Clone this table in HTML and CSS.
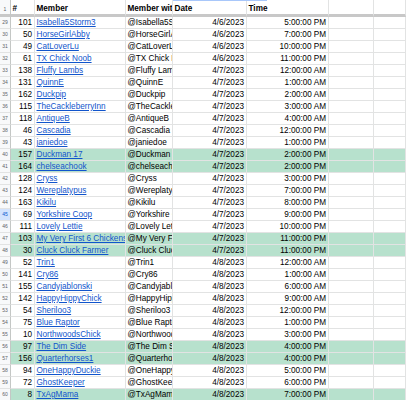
FILE: index.html
```html
<!DOCTYPE html>
<html>
<head>
<meta charset="utf-8">
<link rel="stylesheet" href="styles.css">
</head>
<body>
<div class="sheet">
  <div class="row head">
    <div class="rn">1</div><div class="c">#</div><div class="c">Member</div><div class="c">Member with @</div><div class="c">Date</div><div class="c">Time</div><div class="c"></div><div class="c"></div>
  </div>
  <div class="row"><div class="rn">29</div><div class="c r">101</div><div class="c"><a>Isabella5Storm3</a></div><div class="c">@Isabella5Storm3</div><div class="c r">4/6/2023</div><div class="c r">5:00:00 PM</div><div class="c"></div><div class="c"></div></div>
  <div class="row"><div class="rn">30</div><div class="c r">50</div><div class="c"><a>HorseGirlAbby</a></div><div class="c">@HorseGirlAbby</div><div class="c r">4/6/2023</div><div class="c r">7:00:00 PM</div><div class="c"></div><div class="c"></div></div>
  <div class="row"><div class="rn">31</div><div class="c r">49</div><div class="c"><a>CatLoverLu</a></div><div class="c">@CatLoverLu</div><div class="c r">4/6/2023</div><div class="c r">10:00:00 PM</div><div class="c"></div><div class="c"></div></div>
  <div class="row"><div class="rn">32</div><div class="c r">61</div><div class="c"><a>TX Chick Noob</a></div><div class="c">@TX Chick Noob</div><div class="c r">4/6/2023</div><div class="c r">11:00:00 PM</div><div class="c"></div><div class="c"></div></div>
  <div class="row"><div class="rn">33</div><div class="c r">138</div><div class="c"><a>Fluffy Lambs</a></div><div class="c">@Fluffy Lambs</div><div class="c r">4/7/2023</div><div class="c r">12:00:00 AM</div><div class="c"></div><div class="c"></div></div>
  <div class="row"><div class="rn">34</div><div class="c r">131</div><div class="c"><a>QuinnE</a></div><div class="c">@QuinnE</div><div class="c r">4/7/2023</div><div class="c r">1:00:00 AM</div><div class="c"></div><div class="c"></div></div>
  <div class="row"><div class="rn">35</div><div class="c r">162</div><div class="c"><a>Duckpip</a></div><div class="c">@Duckpip</div><div class="c r">4/7/2023</div><div class="c r">2:00:00 AM</div><div class="c"></div><div class="c"></div></div>
  <div class="row"><div class="rn">36</div><div class="c r">115</div><div class="c"><a>TheCackleberryInn</a></div><div class="c">@TheCackleberryInn</div><div class="c r">4/7/2023</div><div class="c r">3:00:00 AM</div><div class="c"></div><div class="c"></div></div>
  <div class="row"><div class="rn">37</div><div class="c r">118</div><div class="c"><a>AntiqueB</a></div><div class="c">@AntiqueB</div><div class="c r">4/7/2023</div><div class="c r">4:00:00 AM</div><div class="c"></div><div class="c"></div></div>
  <div class="row"><div class="rn">38</div><div class="c r">46</div><div class="c"><a>Cascadia</a></div><div class="c">@Cascadia</div><div class="c r">4/7/2023</div><div class="c r">12:00:00 PM</div><div class="c"></div><div class="c"></div></div>
  <div class="row"><div class="rn">39</div><div class="c r">43</div><div class="c"><a>janiedoe</a></div><div class="c">@janiedoe</div><div class="c r">4/7/2023</div><div class="c r">1:00:00 PM</div><div class="c"></div><div class="c"></div></div>
  <div class="row hl"><div class="rn">40</div><div class="c r">157</div><div class="c"><a>Duckman 17</a></div><div class="c">@Duckman 17</div><div class="c r">4/7/2023</div><div class="c r">2:00:00 PM</div><div class="c"></div><div class="c"></div></div>
  <div class="row hl"><div class="rn">41</div><div class="c r">164</div><div class="c"><a>chelseachook</a></div><div class="c">@chelseachook</div><div class="c r">4/7/2023</div><div class="c r">2:00:00 PM</div><div class="c"></div><div class="c"></div></div>
  <div class="row"><div class="rn">42</div><div class="c r">128</div><div class="c"><a>Cryss</a></div><div class="c">@Cryss</div><div class="c r">4/7/2023</div><div class="c r">3:00:00 PM</div><div class="c"></div><div class="c"></div></div>
  <div class="row"><div class="rn">43</div><div class="c r">124</div><div class="c"><a>Wereplatypus</a></div><div class="c">@Wereplatypus</div><div class="c r">4/7/2023</div><div class="c r">7:00:00 PM</div><div class="c"></div><div class="c"></div></div>
  <div class="row"><div class="rn">44</div><div class="c r">163</div><div class="c"><a>Kikilu</a></div><div class="c">@Kikilu</div><div class="c r">4/7/2023</div><div class="c r">8:00:00 PM</div><div class="c"></div><div class="c"></div></div>
  <div class="row"><div class="rn sel">45</div><div class="c r">69</div><div class="c"><a>Yorkshire Coop</a></div><div class="c">@Yorkshire Coop</div><div class="c r">4/7/2023</div><div class="c r">9:00:00 PM</div><div class="c"></div><div class="c"></div></div>
  <div class="row"><div class="rn">46</div><div class="c r">111</div><div class="c"><a>Lovely Lettie</a></div><div class="c">@Lovely Lettie</div><div class="c r">4/7/2023</div><div class="c r">10:00:00 PM</div><div class="c"></div><div class="c"></div></div>
  <div class="row hl"><div class="rn">47</div><div class="c r">103</div><div class="c"><a>My Very First 6 Chickens</a></div><div class="c">@My Very First 6 Chickens</div><div class="c r">4/7/2023</div><div class="c r">11:00:00 PM</div><div class="c"></div><div class="c"></div></div>
  <div class="row hl"><div class="rn">48</div><div class="c r">30</div><div class="c"><a>Cluck Cluck Farmer</a></div><div class="c">@Cluck Cluck Farmer</div><div class="c r">4/7/2023</div><div class="c r">11:00:00 PM</div><div class="c"></div><div class="c"></div></div>
  <div class="row"><div class="rn">49</div><div class="c r">52</div><div class="c"><a>Trin1</a></div><div class="c">@Trin1</div><div class="c r">4/8/2023</div><div class="c r">12:00:00 AM</div><div class="c"></div><div class="c"></div></div>
  <div class="row"><div class="rn">50</div><div class="c r">141</div><div class="c"><a>Cry86</a></div><div class="c">@Cry86</div><div class="c r">4/8/2023</div><div class="c r">1:00:00 AM</div><div class="c"></div><div class="c"></div></div>
  <div class="row"><div class="rn">51</div><div class="c r">155</div><div class="c"><a>Candyjablonski</a></div><div class="c">@Candyjablonski</div><div class="c r">4/8/2023</div><div class="c r">6:00:00 AM</div><div class="c"></div><div class="c"></div></div>
  <div class="row"><div class="rn">52</div><div class="c r">142</div><div class="c"><a>HappyHippyChick</a></div><div class="c">@HappyHippyChick</div><div class="c r">4/8/2023</div><div class="c r">9:00:00 AM</div><div class="c"></div><div class="c"></div></div>
  <div class="row"><div class="rn">53</div><div class="c r">54</div><div class="c"><a>Sheriloo3</a></div><div class="c">@Sheriloo3</div><div class="c r">4/8/2023</div><div class="c r">12:00:00 PM</div><div class="c"></div><div class="c"></div></div>
  <div class="row"><div class="rn">54</div><div class="c r">75</div><div class="c"><a>Blue Raptor</a></div><div class="c">@Blue Raptor</div><div class="c r">4/8/2023</div><div class="c r">1:00:00 PM</div><div class="c"></div><div class="c"></div></div>
  <div class="row"><div class="rn">55</div><div class="c r">10</div><div class="c"><a>NorthwoodsChick</a></div><div class="c">@NorthwoodsChick</div><div class="c r">4/8/2023</div><div class="c r">3:00:00 PM</div><div class="c"></div><div class="c"></div></div>
  <div class="row hl"><div class="rn">56</div><div class="c r">97</div><div class="c"><a>The Dim Side</a></div><div class="c">@The Dim Side</div><div class="c r">4/8/2023</div><div class="c r">4:00:00 PM</div><div class="c"></div><div class="c"></div></div>
  <div class="row hl"><div class="rn">57</div><div class="c r">156</div><div class="c"><a>Quarterhorses1</a></div><div class="c">@Quarterhorses1</div><div class="c r">4/8/2023</div><div class="c r">4:00:00 PM</div><div class="c"></div><div class="c"></div></div>
  <div class="row"><div class="rn">58</div><div class="c r">94</div><div class="c"><a>OneHappyDuckie</a></div><div class="c">@OneHappyDuckie</div><div class="c r">4/8/2023</div><div class="c r">5:00:00 PM</div><div class="c"></div><div class="c"></div></div>
  <div class="row"><div class="rn">59</div><div class="c r">72</div><div class="c"><a>GhostKeeper</a></div><div class="c">@GhostKeeper</div><div class="c r">4/8/2023</div><div class="c r">6:00:00 PM</div><div class="c"></div><div class="c"></div></div>
  <div class="row hl"><div class="rn">60</div><div class="c r">8</div><div class="c"><a>TxAgMama</a></div><div class="c">@TxAgMama</div><div class="c r">4/8/2023</div><div class="c r">7:00:00 PM</div><div class="c"></div><div class="c"></div></div>
  <div class="selline"></div>
</div>
</body>
</html>
```
FILE: styles.css
```css
* { box-sizing: border-box; }
html, body { margin: 0; padding: 0; }
body {
  width: 406px;
  height: 400px;
  overflow: hidden;
  background: #fff;
  font-family: "Liberation Sans", Arial, sans-serif;
  font-size: 8.2px;
  color: #000;
}
.sheet { position: relative; }
.row {
  display: grid;
  grid-template-columns: 11px 24px 91px 47px 74px 82px 45px 1fr;
  height: 12px;
}
.row > div {
  border-right: 1px solid #e2e3e3;
  border-bottom: 1px solid #e2e3e3;
  overflow: hidden;
  white-space: nowrap;
  line-height: 11px;
  padding: 0 2px 0 1.5px;
}
.row > .rn {
  background: #f8f9fa;
  border-right-color: #c4c7c5;
  color: #5f6368;
  font-size: 5px;
  text-align: center;
  padding: 0;
}
.row > .rn.sel { background: #d3e3fd; color: #0b57d0; }
.r { text-align: right; }
a { color: #1155cc; text-decoration: underline; }
.head { height: 17px; }
.row.head > div {
  font-weight: bold;
  border-bottom: 3px solid #c8c8c8;
  padding-top: 3.5px;
  line-height: 10px;
}
.row.head > .rn { font-weight: normal; }
.hl > div:not(.rn) { background: #b7e1cd; }
.selline {
  position: absolute;
  top: 0;
  left: 173px;
  width: 94px;
  height: 1px;
  background: #a8c7fa;
}
```
